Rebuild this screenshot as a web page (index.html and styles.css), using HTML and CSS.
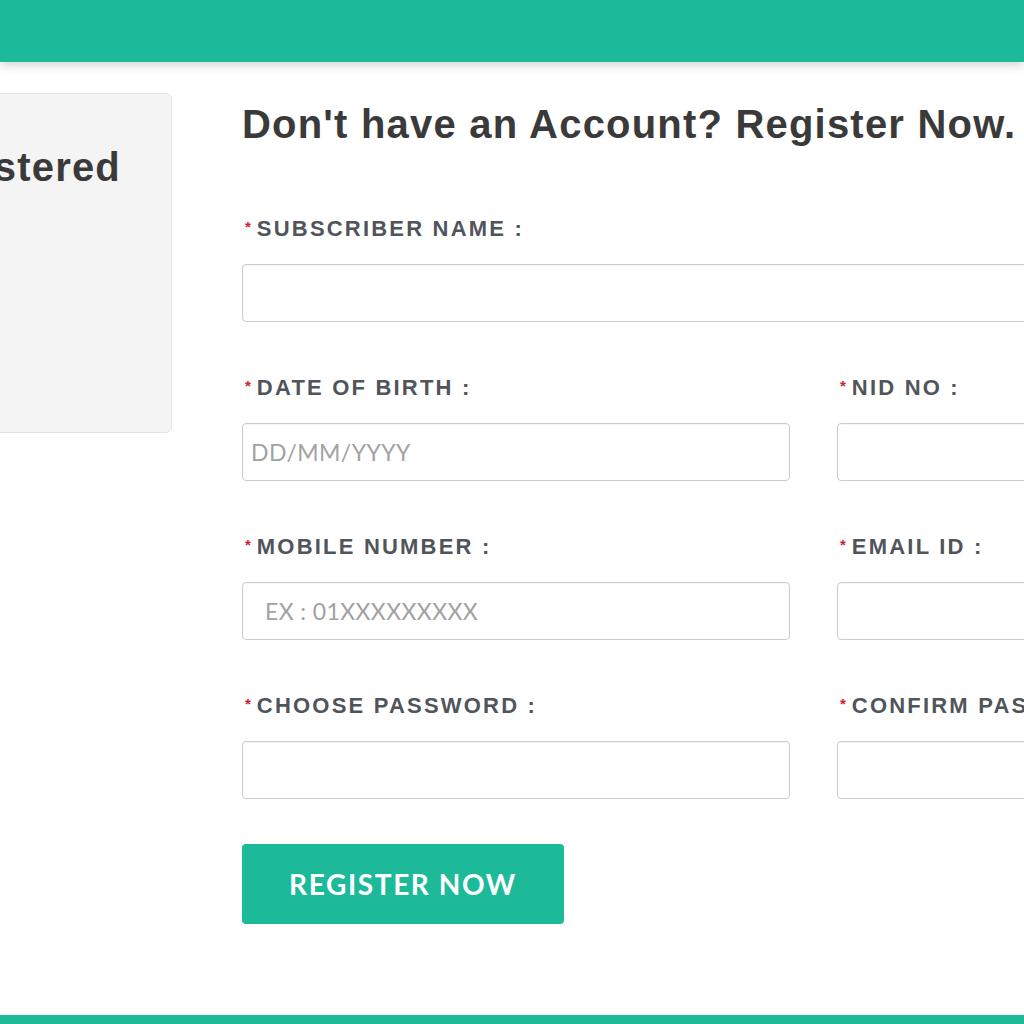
FILE: index.html
```html
<!DOCTYPE html>
<html>
<head>
<meta charset="utf-8">
<link rel="stylesheet" href="styles.css">
</head>
<body>
<header class="topbar"></header>
<main class="content">
  <aside class="login-panel">
    <h2 class="login-title">Already Registered</h2>
  </aside>
  <section class="register">
    <h1 class="register-title">Don't have an Account? Register Now.</h1>
    <form class="form">
      <div class="field field-full">
        <label class="label"><span class="req">*</span>SUBSCRIBER NAME :</label>
        <input class="input" type="text">
      </div>
      <div class="field">
        <label class="label"><span class="req">*</span>DATE OF BIRTH :</label>
        <input class="input" type="text" placeholder="DD/MM/YYYY">
      </div>
      <div class="field">
        <label class="label"><span class="req">*</span>NID NO :</label>
        <input class="input" type="text">
      </div>
      <div class="field">
        <label class="label"><span class="req">*</span>MOBILE NUMBER :</label>
        <input class="input input-indent" type="text" placeholder="EX : 01XXXXXXXXX">
      </div>
      <div class="field">
        <label class="label"><span class="req">*</span>EMAIL ID :</label>
        <input class="input" type="text">
      </div>
      <div class="field">
        <label class="label"><span class="req">*</span>CHOOSE PASSWORD :</label>
        <input class="input" type="password">
      </div>
      <div class="field">
        <label class="label"><span class="req">*</span>CONFIRM PASSWORD :</label>
        <input class="input" type="password">
      </div>
      <div class="actions">
        <button class="btn" type="button">REGISTER NOW</button>
      </div>
    </form>
  </section>
</main>
<footer class="bottombar"></footer>
</body>
</html>
```
FILE: styles.css
```css
html, body {
  margin: 0;
  padding: 0;
  overflow: hidden;
  background: #ffffff;
  width: 1024px;
  height: 1024px;
}
body {
  font-family: "Liberation Sans", Arial, sans-serif;
  display: flex;
  flex-direction: column;
}
.topbar {
  height: 62px;
  background: #1dba9a;
  box-shadow: 0 3px 10px rgba(0, 0, 0, 0.18);
  flex: none;
  position: relative;
  z-index: 1;
}
.content {
  flex: 1;
  display: flex;
  align-items: flex-start;
  padding-top: 31px;
  gap: 70px;
}
.login-panel {
  flex: none;
  box-sizing: border-box;
  width: 220px;
  margin-left: -48px;
  height: 340px;
  background: #f4f4f4;
  border: 1px solid #e4e4e4;
  border-radius: 6px;
  overflow: hidden;
  display: flex;
  justify-content: flex-end;
  align-items: flex-start;
  padding-right: 50px;
}
.login-title {
  flex: none;
  margin: 51px 0 0;
  font-size: 40px;
  line-height: 44px;
  letter-spacing: 1.2px;
  font-weight: 700;
  color: #3a3a3a;
  white-space: nowrap;
}
.register {
  flex: none;
  width: 1143px;
}
.register-title {
  margin: 9px 0 0;
  font-size: 40px;
  line-height: 44px;
  letter-spacing: 1.2px;
  font-weight: 700;
  color: #3a3a3a;
  white-space: nowrap;
}
.form {
  margin-top: 71px;
  display: grid;
  grid-template-columns: 548px 548px;
  column-gap: 47px;
  row-gap: 54px;
}
.field {
  display: flex;
  flex-direction: column;
}
.field-full {
  grid-column: 1 / -1;
}
.label {
  display: block;
  height: 24px;
  font-size: 22px;
  line-height: 24px;
  font-weight: 700;
  color: #50555b;
  letter-spacing: 2.2px;
  margin-bottom: 23px;
  white-space: nowrap;
}
.req {
  color: #d0202a;
  font-size: 15px;
  line-height: 0;
  vertical-align: 4px;
  margin-left: 3px;
  margin-right: 6px;
  letter-spacing: 0;
}
.input {
  box-sizing: border-box;
  height: 58px;
  border: 1px solid #cccccc;
  border-radius: 4px;
  background: #fff;
  padding: 0 8px;
  font-family: Lato, sans-serif;
  font-size: 23px;
  letter-spacing: 0.4px;
  color: #333;
  box-shadow: inset 0 1px 1px rgba(0, 0, 0, 0.04);
}
.input::placeholder {
  color: #a2a2a2;
}
.input-indent {
  padding-left: 22px;
}
.actions {
  grid-column: 1 / -1;
  margin-top: -9px;
}
.btn {
  width: 322px;
  height: 80px;
  background: #1dba9a;
  border: none;
  border-radius: 4px;
  color: #ffffff;
  font-family: Lato, sans-serif;
  font-weight: 700;
  font-size: 28px;
  letter-spacing: 1.6px;
  cursor: pointer;
}
.bottombar {
  flex: none;
  height: 9px;
  background: #1dba9a;
}
```
